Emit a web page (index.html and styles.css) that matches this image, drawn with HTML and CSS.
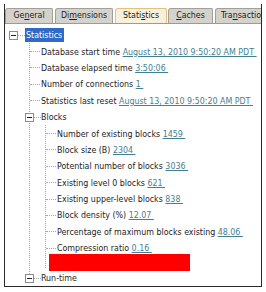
FILE: index.html
```html
<!DOCTYPE html>
<html lang="en">
<head>
    <meta charset="UTF-8">
    <title>Statistics</title>
    <link rel="stylesheet" href="styles.css">
</head>
<body>

    <div class="frame">
        <!-- Tab strip -->
        <div class="tabs">
            <div class="tab tab-general">Ge<u>n</u>eral</div>
            <div class="tab tab-dimensions">Di<u>m</u>ensions</div>
            <div class="tab tab-statistics active">Stati<u>s</u>tics</div>
            <div class="tab tab-caches"><u>C</u>aches</div>
            <div class="tab tab-transactions">Tra<u>n</u>sactions</div>
        </div>

        <!-- Statistics tree -->
        <div class="content">
            <ul class="tree">
                <li>
                    <div class="row"><span class="toggle"></span><span class="dash short"></span><span class="label selected">Statistics</span></div>
                    <ul class="children">
                        <li><div class="row"><span class="dash"></span><span class="label">Database start time <a>August 13, 2010 9:50:20 AM PDT&nbsp;</a></span></div></li>
                        <li><div class="row"><span class="dash"></span><span class="label">Database elapsed time <a>3:50:06&nbsp;</a></span></div></li>
                        <li><div class="row"><span class="dash"></span><span class="label">Number of connections <a>1&nbsp;</a></span></div></li>
                        <li><div class="row"><span class="dash"></span><span class="label">Statistics last reset <a>August 13, 2010 9:50:20 AM PDT&nbsp;</a></span></div></li>
                        <li>
                            <div class="row"><span class="toggle"></span><span class="dash short"></span><span class="label">Blocks</span></div>
                            <ul class="children last-bar">
                                <li><div class="row"><span class="dash"></span><span class="label">Number of existing blocks <a>1459&nbsp;</a></span></div></li>
                                <li><div class="row"><span class="dash"></span><span class="label">Block size (B) <a>2304&nbsp;</a></span></div></li>
                                <li><div class="row"><span class="dash"></span><span class="label">Potential number of blocks <a>3036&nbsp;</a></span></div></li>
                                <li><div class="row"><span class="dash"></span><span class="label">Existing level 0 blocks <a>621&nbsp;</a></span></div></li>
                                <li><div class="row"><span class="dash"></span><span class="label">Existing upper-level blocks <a>838&nbsp;</a></span></div></li>
                                <li><div class="row"><span class="dash"></span><span class="label">Block density (%) <a>12.07&nbsp;</a></span></div></li>
                                <li><div class="row"><span class="dash"></span><span class="label">Percentage of maximum blocks existing <a>48.06&nbsp;</a></span></div></li>
                                <li><div class="row"><span class="dash"></span><span class="label">Compression ratio <a>0.16&nbsp;</a></span></div></li>
                                <li><div class="row bar-row"><span class="redacted"></span></div></li>
                            </ul>
                        </li>
                        <li><div class="row"><span class="toggle"></span><span class="dash short"></span><span class="label">Run-time</span></div></li>
                    </ul>
                </li>
            </ul>
        </div>
    </div>

</body>
</html>
```

FILE: styles.css
```css
/* General styles */
body {
    margin: 0;
    background: white;
    font-family: "DejaVu Sans Condensed", "DejaVu Sans", sans-serif;
    font-size: 8.8px;
    color: #1c1c1c;
}

/* Outer frame */
.frame {
    margin: 4px 0 0 4px;
    width: 258px;
    height: 283px;
    box-sizing: border-box;
    border: 1px solid #2a2a2a;
    border-top: none;
    overflow: hidden;
    background: white;
}

/* Tabs */
.tabs {
    display: flex;
    gap: 2px;
    padding-top: 4px;
    height: 15px;
    border-bottom: 1px solid #9a9a98;
}
.tab {
    flex: none;
    height: 15px;
    box-sizing: border-box;
    line-height: 13px;
    text-align: center;
    background: #d5d2cb;
    border: 1px solid #a19f98;
    border-bottom: none;
    border-radius: 3px 2px 0 0;
}
.tab u {
    text-decoration: underline;
}
.tab-general { width: 48px; }
.tab-dimensions { width: 58px; }
.tab-statistics { width: 52px; }
.tab-caches { width: 45px; margin-left: -1px; }
.tab-transactions { width: 62px; text-align: left; padding-left: 5px; }
.tab.active {
    background: #f7f0dc;
    border-color: #e2c17e;
}

/* Tree */
.content {
    padding-top: 3px;
}
ul {
    list-style: none;
    margin: 0;
    padding: 0;
}
.tree {
    padding-left: 4px;
}
.children {
    position: relative;
    margin-left: 16px;
}
.children::before {
    content: "";
    position: absolute;
    left: 4px;
    top: 0;
    bottom: 8px;
    border-left: 1px dotted #a8a8a8;
}
.children.last-bar::before {
    bottom: 2px;
}
.row {
    display: flex;
    align-items: center;
    height: 16.4px;
    white-space: nowrap;
}
.toggle {
    position: relative;
    flex: none;
    width: 9px;
    height: 9px;
    box-sizing: border-box;
    border: 1px solid #8c8c8c;
    background: white;
    z-index: 1;
}
.toggle::after {
    content: "";
    position: absolute;
    left: 1px;
    top: 3px;
    width: 5px;
    height: 1px;
    background: #222;
}
.dash {
    flex: none;
    width: 10px;
    margin-left: 5px;
    margin-right: 1px;
    border-top: 1px dotted #a8a8a8;
}
.dash.short {
    width: 7px;
    margin-left: 0;
    margin-right: 0;
}
.label {
    line-height: 12px;
}
.label.selected {
    background: #316ac5;
    color: white;
    padding: 1px 2px 1px 1px;
}
a {
    color: #44818f;
    text-decoration: underline;
}

/* Redacted row */
.bar-row {
    height: 13.6px;
    align-items: flex-start;
}
.redacted {
    display: block;
    width: 141px;
    height: 17px;
    margin-left: 8px;
    margin-top: -2.6px;
    background: #ff0000;
    position: relative;
    z-index: 1;
}
```
